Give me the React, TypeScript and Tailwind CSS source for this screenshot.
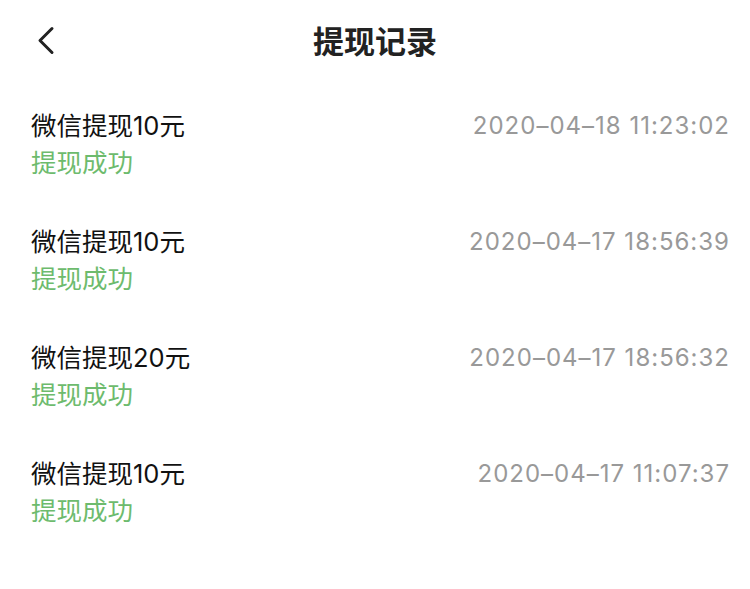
import React from "react";

interface Record {
  amount: string;
  status: string;
  time: string;
}

const records: Record[] = [
  { amount: "微信提现10元", status: "提现成功", time: "2020–04–18 11:23:02" },
  { amount: "微信提现10元", status: "提现成功", time: "2020–04–17 18:56:39" },
  { amount: "微信提现20元", status: "提现成功", time: "2020–04–17 18:56:32" },
  { amount: "微信提现10元", status: "提现成功", time: "2020–04–17 11:07:37" },
];

const App: React.FC = () => {
  return (
    <div
      className="w-[750px] h-[589px] bg-white overflow-hidden"
      style={{ fontFamily: 'Inter, "Noto Sans CJK SC", sans-serif' }}
    >
      <div className="h-[82px] grid grid-cols-[1fr_auto_1fr] items-center">
        <div className="pl-[36px] flex items-center">
          <svg width="22" height="30" viewBox="0 0 22 30" fill="none">
            <path
              d="M16 2.5 L4 14.5 L16 26.5"
              stroke="#222"
              strokeWidth="3"
              strokeLinecap="round"
              strokeLinejoin="round"
            />
          </svg>
        </div>
        <h1 className="text-[31px] font-semibold text-[#222] leading-none">提现记录</h1>
        <div />
      </div>

      <div>
        {records.map((r, i) => (
          <div key={i} className="h-[116px] pt-[25px] pl-[31px] pr-[20px] flex justify-between">
            <div>
              <div className="text-[25.5px] leading-[37px] text-[#111]">{r.amount}</div>
              <div className="text-[25.5px] leading-[37px] text-[#6dbb6d]">{r.status}</div>
            </div>
            <div className="text-[24px] leading-[37px] tracking-[1px] text-[#999]">{r.time}</div>
          </div>
        ))}
      </div>
    </div>
  );
};

export default App;
